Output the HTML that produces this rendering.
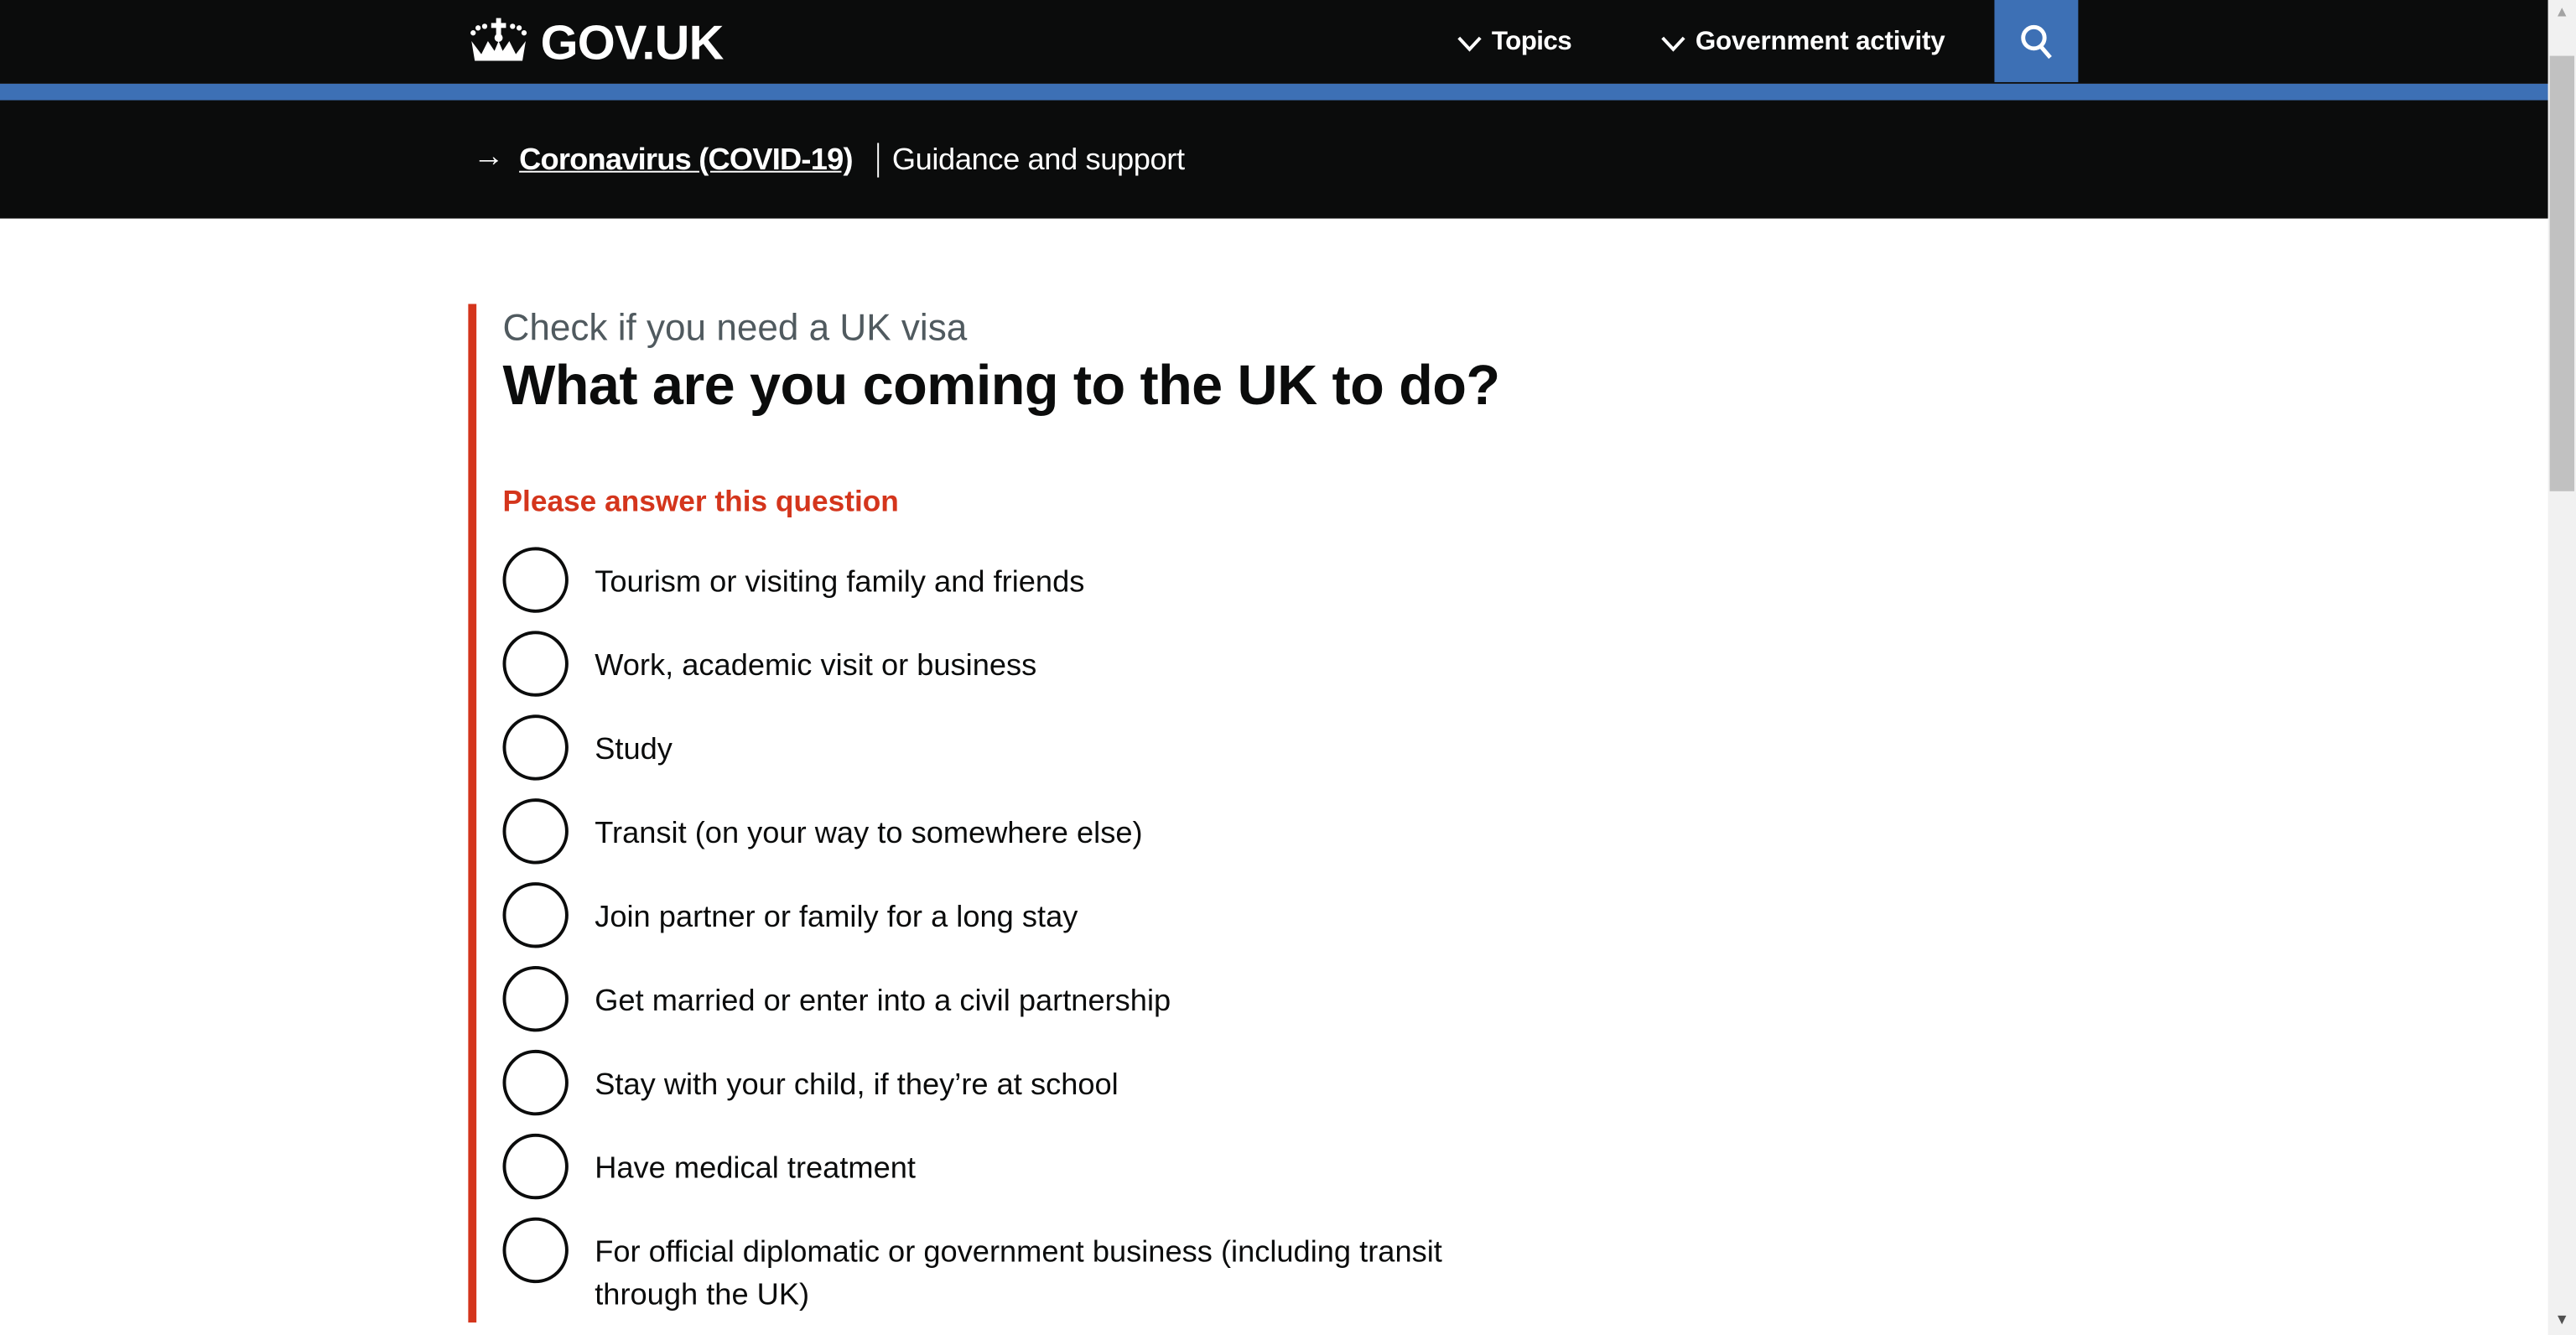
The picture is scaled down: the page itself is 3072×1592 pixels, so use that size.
<!DOCTYPE html>
<html><head><meta charset="utf-8"><style>
html,body{margin:0;padding:0;overflow:hidden;background:#fff}
body{width:3072px;height:1592px;position:relative}
#s{position:absolute;left:0;top:0;width:1568px;height:813px;transform:scale(1.95918);transform-origin:0 0;font-family:"Liberation Sans",sans-serif;color:#0b0c0c}
.a{position:absolute;white-space:nowrap}
.hdr{position:absolute;left:0;top:0;width:1551px;height:51px;background:#0b0c0c}
.blue{position:absolute;left:0;top:51px;width:1551px;height:10px;background:#3d70b5}
.band{position:absolute;left:0;top:61px;width:1551px;height:72px;background:#0b0c0c}
.sb{position:absolute;left:1551px;top:0;width:17px;height:813px;background:#f1f1f1}
.thumb{position:absolute;left:1552px;top:34px;width:15px;height:265px;background:#c1c1c1}
.radio{position:absolute;left:306px;width:36px;height:36px;border:2px solid #0b0c0c;border-radius:50%}
.lbl{position:absolute;left:362px;font-size:18.5px;white-space:nowrap}
</style></head><body><div id="s">
<div class="hdr"></div><div class="blue"></div><div class="band"></div>
<div class="sb"></div><div class="thumb"></div>
<div class="a" style="left:1555px;top:2px;font-size:9px;color:#a3a3a3">▲</div>
<div class="a" style="left:1555px;top:798px;font-size:9px;color:#505050">▼</div>
<svg class="a" style="left:285px;top:11px" width="37" height="28" viewBox="0 0 37 28" fill="#fff">
<rect x="17" y="0" width="3" height="10"/><rect x="14" y="3" width="9" height="3"/>
<circle cx="3" cy="9" r="1.6"/><circle cx="6" cy="6" r="1.6"/><circle cx="10" cy="5" r="1.6"/><circle cx="27" cy="5" r="1.6"/><circle cx="31" cy="6" r="1.6"/><circle cx="34" cy="9" r="1.6"/>
<circle cx="18.5" cy="12" r="2.5"/>
<path d="M2 14 L8 22 L12 14 L16 20 L18.5 14 L21 20 L25 14 L29 22 L35 14 L33 26 L4 26 Z"/>
</svg>
<div class="a" style="left:329px;top:10px;font-size:29.5px;font-weight:bold;color:#fff;letter-spacing:-0.4px">GOV.UK</div>
<svg class="a" style="left:887px;top:22px" width="15" height="10"><path d="M1 1 L7.5 8 L14 1" stroke="#fff" stroke-width="2" fill="none"/></svg>
<div class="a" style="left:908px;top:17px;font-size:16px;font-weight:bold;color:#fff;letter-spacing:-0.3px">Topics</div>
<svg class="a" style="left:1011px;top:22px" width="15" height="10"><path d="M1 1 L7.5 8 L14 1" stroke="#fff" stroke-width="2" fill="none"/></svg>
<div class="a" style="left:1032px;top:17px;font-size:16px;font-weight:bold;color:#fff;letter-spacing:-0.1px">Government activity</div>
<div class="a" style="left:1214px;top:0;width:51px;height:50px;background:#3d70b5"></div>
<svg class="a" style="left:1229px;top:14px" width="22" height="24"><circle cx="9" cy="9" r="6.5" stroke="#fff" stroke-width="2.5" fill="none"/><path d="M13 14 L19 21" stroke="#fff" stroke-width="2.5"/></svg>
<div class="a" style="left:288px;top:85px;font-size:19px;color:#fff">→</div>
<div class="a" style="left:316px;top:86px;font-size:18.5px;font-weight:bold;color:#fff;text-decoration:underline;letter-spacing:-0.4px">Coronavirus (COVID-19)</div>
<div class="a" style="left:534px;top:87px;width:1px;height:21px;background:#fff"></div>
<div class="a" style="left:543px;top:86px;font-size:18.5px;color:#fff;letter-spacing:-0.2px">Guidance and support</div>
<div class="a" style="left:285px;top:185px;width:5px;height:620px;background:#d4351c"></div>
<div class="a" style="left:306px;top:187px;font-size:22.5px;color:#505a5f">Check if you need a UK visa</div>
<div class="a" style="left:306px;top:216px;font-size:34px;font-weight:bold;letter-spacing:-0.3px">What are you coming to the UK to do?</div>
<div class="a" style="left:306px;top:295px;font-size:18px;font-weight:bold;color:#d4351c">Please answer this question</div>
<div class="radio" style="top:333px"></div><div class="lbl" style="top:343px">Tourism or visiting family and friends</div>
<div class="radio" style="top:384px"></div><div class="lbl" style="top:394px">Work, academic visit or business</div>
<div class="radio" style="top:435px"></div><div class="lbl" style="top:445px">Study</div>
<div class="radio" style="top:486px"></div><div class="lbl" style="top:496px">Transit (on your way to somewhere else)</div>
<div class="radio" style="top:537px"></div><div class="lbl" style="top:547px">Join partner or family for a long stay</div>
<div class="radio" style="top:588px"></div><div class="lbl" style="top:598px">Get married or enter into a civil partnership</div>
<div class="radio" style="top:639px"></div><div class="lbl" style="top:649px">Stay with your child, if they’re at school</div>
<div class="radio" style="top:690px"></div><div class="lbl" style="top:700px">Have medical treatment</div>
<div class="radio" style="top:741px"></div><div class="lbl" style="top:749px;line-height:26px">For official diplomatic or government business (including transit<br>through the UK)</div>
</div></body></html>
